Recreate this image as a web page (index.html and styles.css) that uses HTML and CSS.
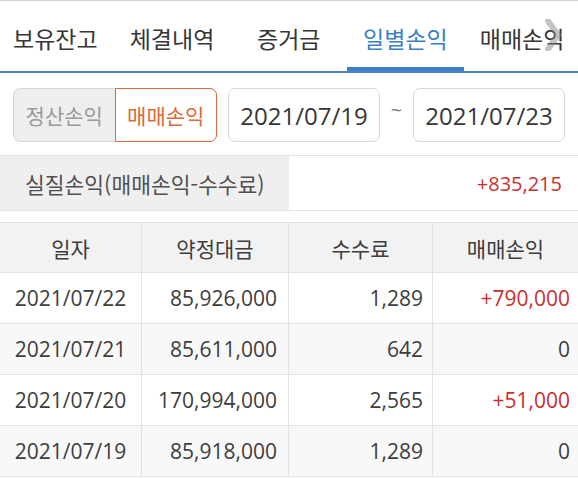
FILE: index.html
```html
<!DOCTYPE html>
<html lang="ko">
<head>
<meta charset="utf-8">
<link rel="stylesheet" href="styles.css">
</head>
<body>
<div class="tabs">
  <div class="tab">보유잔고</div>
  <div class="tab">체결내역</div>
  <div class="tab">증거금</div>
  <div class="tab active">일별손익</div>
  <div class="tab">매매손익</div>
  <svg class="more" width="16" height="32" viewBox="0 0 16 32"><path d="M3 2 L13 16 L3 30" fill="none" stroke="#888" stroke-width="6" stroke-linecap="round" stroke-linejoin="round" opacity="0.5"/></svg>
</div>
<div class="filter">
  <div class="seg">
    <div class="seg-item">정산손익</div>
    <div class="seg-item on">매매손익</div>
  </div>
  <div class="date">2021/07/19</div>
  <div class="tilde">~</div>
  <div class="date">2021/07/23</div>
</div>
<div class="summary">
  <div class="sum-label">실질손익(매매손익-수수료)</div>
  <div class="sum-value up">+835,215</div>
</div>
<div class="table">
  <div class="row head">
    <div class="c c1">일자</div><div class="c c2">약정대금</div><div class="c c3">수수료</div><div class="c c4">매매손익</div>
  </div>
  <div class="row">
    <div class="c c1">2021/07/22</div><div class="c c2">85,926,000</div><div class="c c3">1,289</div><div class="c c4 up">+790,000</div>
  </div>
  <div class="row alt">
    <div class="c c1">2021/07/21</div><div class="c c2">85,611,000</div><div class="c c3">642</div><div class="c c4">0</div>
  </div>
  <div class="row">
    <div class="c c1">2021/07/20</div><div class="c c2">170,994,000</div><div class="c c3">2,565</div><div class="c c4 up">+51,000</div>
  </div>
  <div class="row alt">
    <div class="c c1">2021/07/19</div><div class="c c2">85,918,000</div><div class="c c3">1,289</div><div class="c c4">0</div>
  </div>
</div>
</body>
</html>
```
FILE: styles.css
```css
* { box-sizing: border-box; }
html, body { margin: 0; padding: 0; background: #fff; }
body {
  font-family: "Open Sans", "Noto Sans CJK KR", sans-serif;
  color: #3d3d3d;
  width: 578px;
  height: 478px;
  overflow: hidden;
}
.tabs {
  position: relative;
  display: flex;
  height: 73px;
  border-top: 1px solid #d4d4d4;
  border-bottom: 2px solid #4a87c9;
  margin-left: -3px;
  width: 581px;
  overflow: hidden;
}
.tab {
  flex: 0 0 116.7px;
  display: flex;
  align-items: center;
  justify-content: center;
  font-family: "Noto Sans CJK KR", sans-serif;
  font-size: 23px;
  color: #363636;
  padding-top: 3px;
  white-space: nowrap;
  position: relative;
}
.tab.active { color: #3b7fc6; }
.tab.active::after {
  content: "";
  position: absolute;
  left: 0; right: 0; bottom: -1px;
  height: 5px;
  background: #3b7fc6;
}
.more {
  position: absolute;
  right: 17px;
  top: 18px;
}
.filter {
  display: flex;
  align-items: center;
  padding: 15px 0 13px 13px;
}
.seg {
  display: flex;
  height: 54px;
  width: 204px;
  border: 1px solid #d6d6d6;
  border-radius: 7px;
  background: #eeeeee;
}
.seg-item {
  flex: 1;
  display: flex;
  align-items: center;
  justify-content: center;
  font-family: "Noto Sans CJK KR", sans-serif;
  font-size: 21px;
  color: #9a9a9a;
}
.seg-item.on {
  background: #fff;
  color: #dc6a3a;
  border: 1.5px solid #dc6a3a;
  border-radius: 0 7px 7px 0;
  margin: -1px -1px -1px 0;
}
.date {
  width: 152px;
  height: 54px;
  border: 1px solid #d8d8d8;
  border-radius: 7px;
  display: flex;
  align-items: center;
  justify-content: center;
  font-size: 24px;
  color: #363636;
}
.seg + .date { margin-left: 11px; }
.tilde {
  width: 25px;
  margin: 0 4px;
  text-align: center;
  font-size: 20px;
  color: #777;
  padding-bottom: 12px;
}
.summary {
  display: flex;
  height: 56px;
  border-top: 1px solid #e2e2e2;
  border-bottom: 1px solid #e2e2e2;
}
.sum-label {
  width: 289px;
  background: #efefef;
  display: flex;
  align-items: center;
  padding-left: 25px;
  font-family: "Noto Sans CJK KR", sans-serif;
  font-size: 21.5px;
  color: #505050;
  white-space: nowrap;
}
.sum-value {
  flex: 1;
  display: flex;
  align-items: center;
  justify-content: flex-end;
  padding-right: 16px;
  font-size: 20px;
}
.up { color: #c9302c; }
.table { margin-top: 11px; border-top: 1px solid #e2e2e2; }
.row {
  display: grid;
  grid-template-columns: 142px 147px 144px 145px;
  height: 51px;
  border-bottom: 1px solid #e2e2e2;
  background: #fff;
}
.row.alt { background: #f8f8f8; }
.row.head { background: #f2f2f2; height: 50px; }
.c {
  display: flex;
  align-items: center;
  justify-content: flex-end;
  border-right: 1px solid #e2e2e2;
  font-size: 21px;
  color: #3d3d3d;
  white-space: nowrap;
}
.c4 { border-right: none; padding-right: 8px; }
.c1 { justify-content: center; }
.c2 { padding-right: 11px; }
.c3 { padding-right: 9px; }
.head .c {
  justify-content: center;
  padding-right: 0;
  font-family: "Noto Sans CJK KR", sans-serif;
  font-size: 21px;
  color: #3d3d3d;
}
.c4.up { color: #c9302c; }
```
